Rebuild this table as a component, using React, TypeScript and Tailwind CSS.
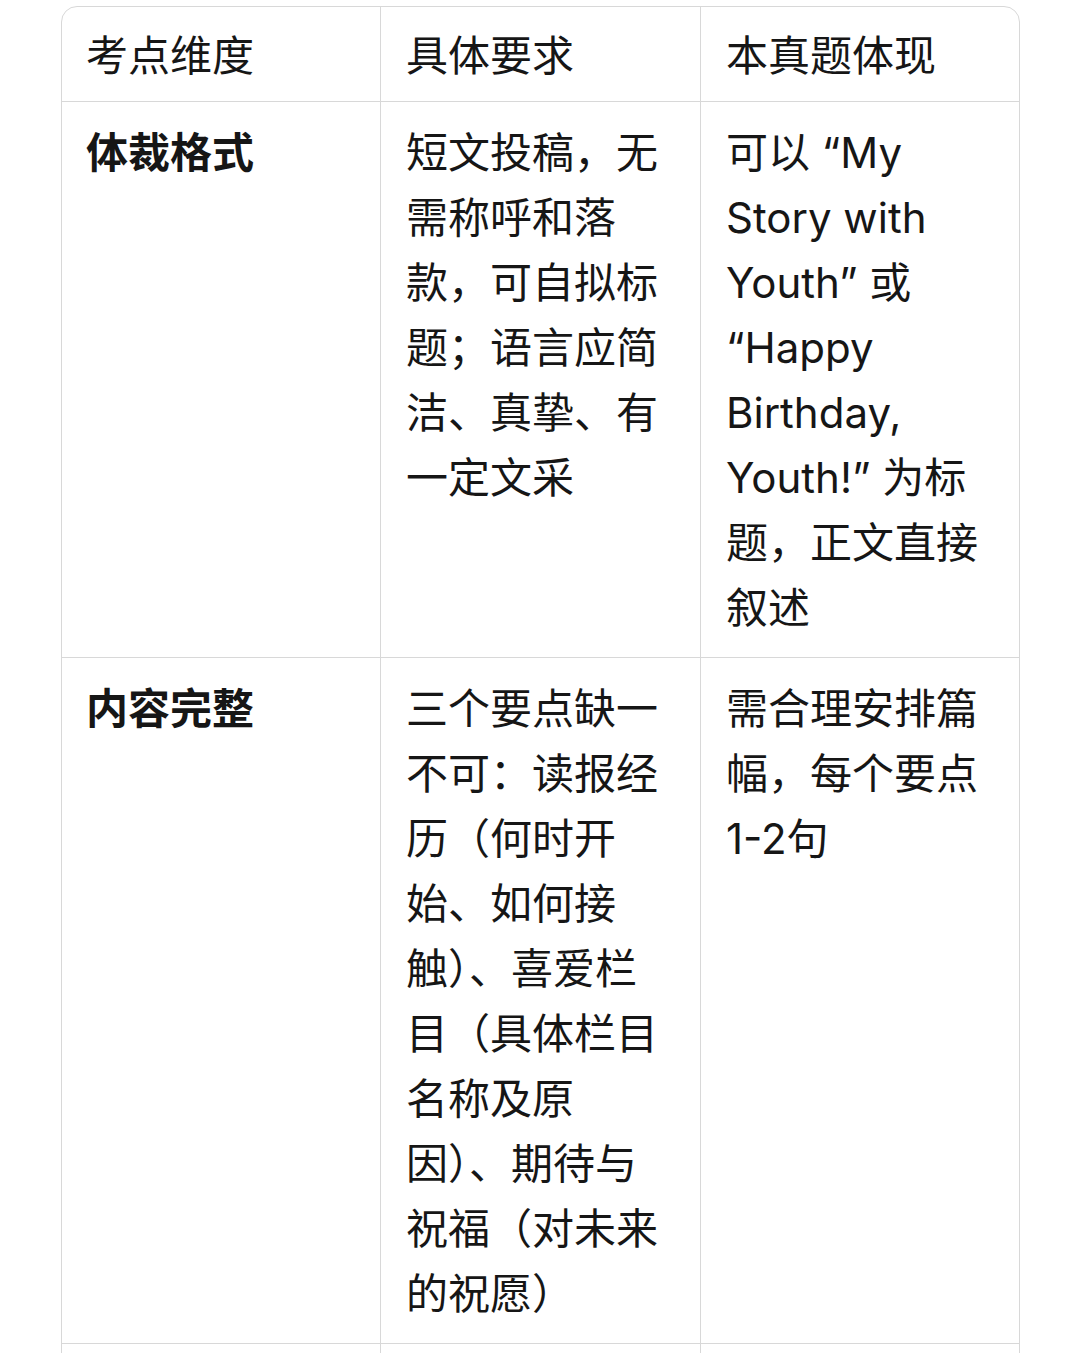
const rows: { head: string; req: string[]; show: string[] }[] = [
  {
    head: "体裁格式",
    req: ["短文投稿，无", "需称呼和落", "款，可自拟标", "题；语言应简", "洁、真挚、有", "一定文采"],
    show: ["可以 “My", "Story with", "Youth” 或", "“Happy", "Birthday,", "Youth!” 为标", "题，正文直接", "叙述"],
  },
  {
    head: "内容完整",
    req: [
      "三个要点缺一",
      "不可：读报经",
      "历（何时开",
      "始、如何接",
      "触）、喜爱栏",
      "目（具体栏目",
      "名称及原",
      "因）、期待与",
      "祝福（对未来",
      "的祝愿）",
    ],
    show: ["需合理安排篇", "幅，每个要点", "1-2句"],
  },
];

function Lines({ lines }: { lines: string[] }) {
  return (
    <>
      {lines.map((l, i) => (
        <div key={i} className="whitespace-nowrap">
          {l}
        </div>
      ))}
    </>
  );
}

export default function App() {
  return (
    <div
      className="h-[1353px] overflow-hidden bg-white pt-[6px] text-[#161616]"
      style={{ fontFamily: 'Inter, "Noto Sans CJK SC", sans-serif' }}
    >
      <div className="ml-[61px] w-[959px] rounded-t-[16px] border border-[#d8d8d8]">
        <div className="grid grid-cols-[319px_320px_318px] text-[42px] leading-[65px]">
          {/* header */}
          <div className="border-r border-b border-[#d8d8d8] pl-[24px] pt-[16px] pb-[13px]">考点维度</div>
          <div className="border-r border-b border-[#d8d8d8] pl-[25px] pt-[16px] pb-[13px]">具体要求</div>
          <div className="border-b border-[#d8d8d8] pl-[25px] pt-[16px] pb-[13px]">本真题体现</div>

          {rows.map((r) => (
            <div key={r.head} className="contents">
              <div className="border-r border-b border-[#d8d8d8] pl-[24px] pt-[18px] pb-[17px] font-bold">{r.head}</div>
              <div className="border-r border-b border-[#d8d8d8] pl-[25px] pt-[18px] pb-[17px]">
                <Lines lines={r.req} />
              </div>
              <div className="border-b border-[#d8d8d8] pl-[25px] pt-[18px] pb-[17px]">
                <Lines lines={r.show} />
              </div>
            </div>
          ))}

          <div className="h-[120px] border-r border-[#d8d8d8]" />
          <div className="h-[120px] border-r border-[#d8d8d8]" />
          <div className="h-[120px]" />
        </div>
      </div>
    </div>
  );
}
